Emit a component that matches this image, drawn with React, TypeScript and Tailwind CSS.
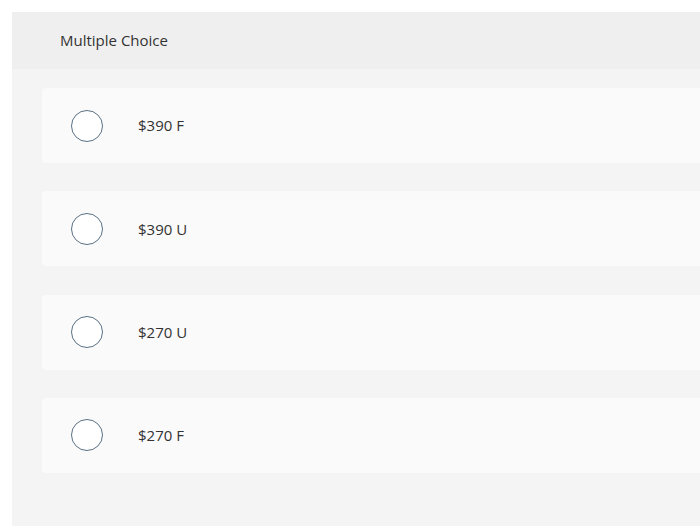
const OPTIONS = ["$390 F", "$390 U", "$270 U", "$270 F"];

export default function App() {
  return (
    <div
      className="w-[700px] h-[532px] overflow-hidden bg-white pt-3 pl-3"
      style={{ fontFamily: '"Open Sans", "Liberation Sans", sans-serif' }}
    >
      <div className="w-[720px] bg-[#f4f4f4]">
        {/* header */}
        <div className="h-[57px] bg-[#efefef] flex items-center pl-12 text-[15px] text-[#333]">
          Multiple Choice
        </div>

        {/* choices */}
        <div className="flex flex-col gap-[28.33px] pt-[19px] pb-[53px] pl-[30px]">
          {OPTIONS.map((opt) => (
            <label
              key={opt}
              className="h-[75px] bg-[#fafafa] rounded flex items-center pl-[29px] cursor-pointer"
            >
              <span className="w-8 h-8 rounded-full border border-[#5a7184] bg-white shrink-0" />
              <span className="ml-[35px] text-[15px] text-[#333]">{opt}</span>
            </label>
          ))}
        </div>
      </div>
    </div>
  );
}
